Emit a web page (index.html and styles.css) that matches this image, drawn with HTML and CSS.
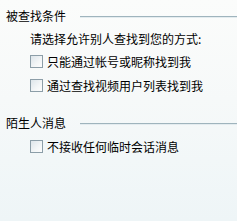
FILE: index.html
```html
<!DOCTYPE html>
<html>
<head>
<meta charset="utf-8">
<link rel="stylesheet" href="styles.css">
</head>
<body>
<div class="panel">
  <div class="group">
    <div class="title"><span>被查找条件</span><div class="line"></div></div>
    <div class="options">
      <div class="row hint">请选择允许别人查找到您的方式:</div>
      <label class="row cb1"><span class="box"></span><span>只能通过帐号或昵称找到我</span></label>
      <label class="row cb2"><span class="box"></span><span>通过查找视频用户列表找到我</span></label>
    </div>
  </div>
  <div class="group group2">
    <div class="title"><span>陌生人消息</span><div class="line"></div></div>
    <div class="options opts2">
      <label class="row"><span class="box"></span><span>不接收任何临时会话消息</span></label>
    </div>
  </div>
</div>
</body>
</html>
```
FILE: styles.css
```css
html, body {
  margin: 0;
  padding: 0;
}
body {
  width: 237px;
  height: 221px;
  overflow: hidden;
  background: linear-gradient(to bottom, #fbfcfb 0%, #f6f9f9 45%, #eef5f7 100%);
  font-family: "Noto Sans CJK SC", "Noto Sans", sans-serif;
  font-size: 12px;
  color: #000;
}
.panel {
  padding-top: 4px;
  display: flex;
  flex-direction: column;
}
.title {
  height: 22px;
  display: flex;
  align-items: center;
  padding-left: 6px;
  white-space: nowrap;
}
.line {
  flex: 1;
  margin-left: 14px;
  margin-top: 2px;
  height: 1px;
  background: #9fb4bd;
  box-shadow: 0 1px 0 #e4ecef;
}
.options {
  padding-left: 30px;
  display: flex;
  flex-direction: column;
}
.row {
  display: flex;
  align-items: center;
  height: 23px;
  white-space: nowrap;
}
.hint {
  height: 24px;
}
.cb2 {
  height: 24px;
}
.box {
  width: 11px;
  height: 11px;
  border: 1px solid #8c9ea8;
  background: linear-gradient(135deg, #dde5ea 0%, #f3f6f7 60%, #fdfdfd 100%);
  margin-right: 4px;
  flex: none;
}
.group2 {
  margin-top: 14px;
}
.opts2 {
  margin-top: 2px;
}
```
